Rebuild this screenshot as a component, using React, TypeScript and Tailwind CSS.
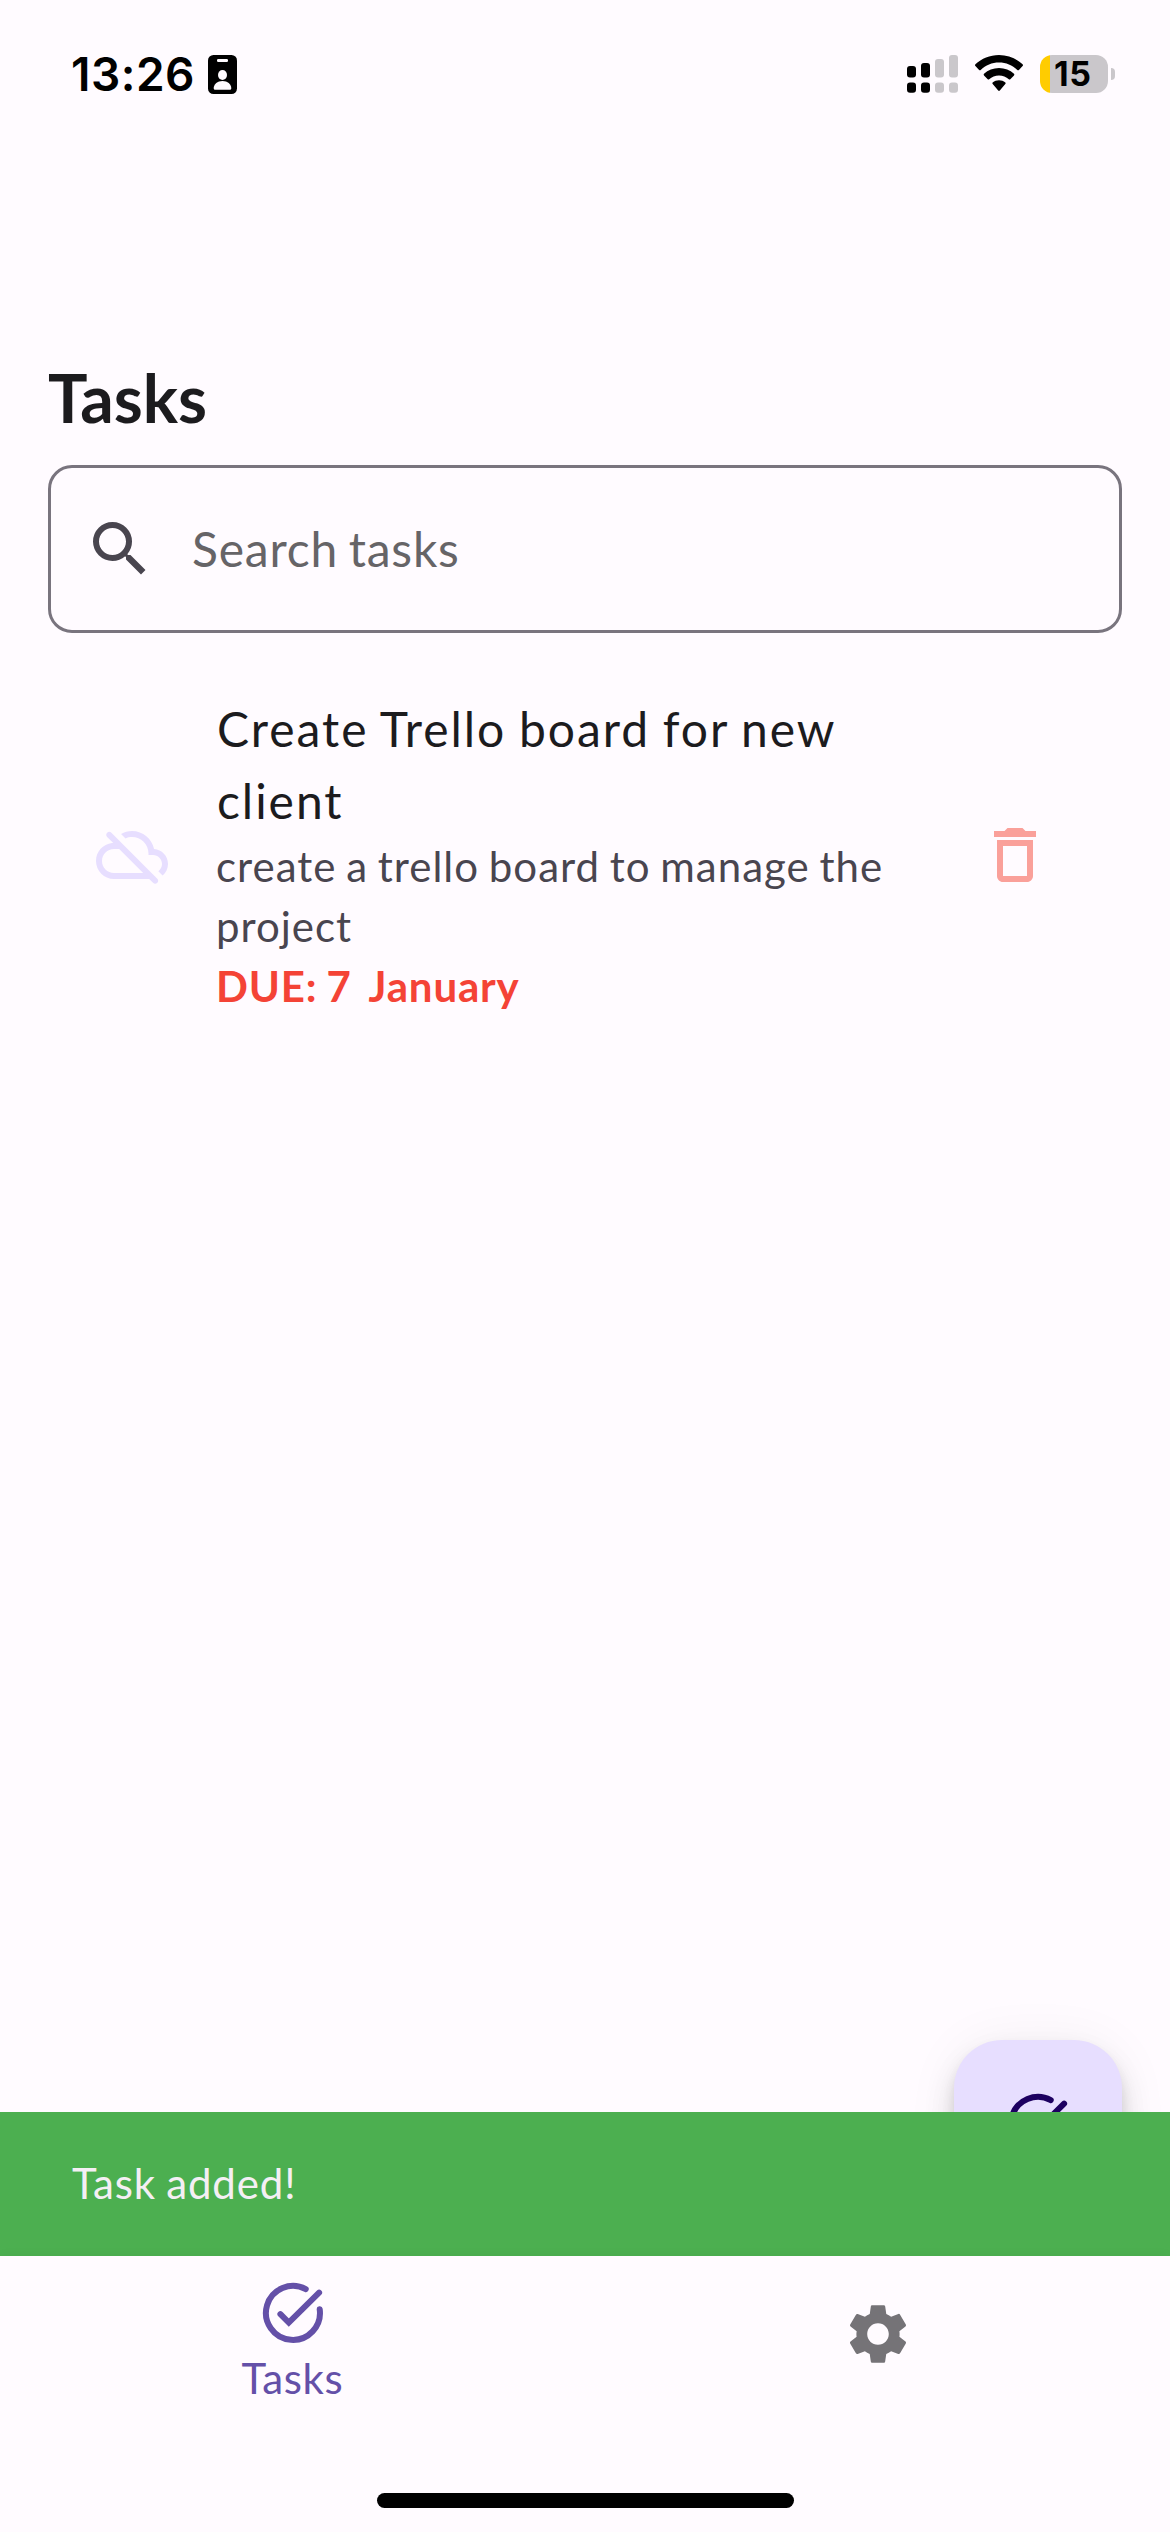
import { MdDeleteOutline, MdSearch, MdSettings } from 'react-icons/md';

function TaskAltIcon({ className }: { className: string }) {
  return (
    <svg viewBox="0 0 24 24" fill="none" stroke="currentColor" strokeWidth="2" strokeLinecap="round" className={className}>
      <path d="M16.25 4.05A9 9 0 1 0 20.9 10.75" />
      <path d="M7.8 12.4l2.8 2.8L20.7 5.2" />
    </svg>
  );
}

function CloudOffIcon({ className }: { className: string }) {
  return (
    <svg viewBox="0 0 24 24" fill="currentColor" className={className}>
      <path d="M24 15c0-2.64-2.05-4.78-4.65-4.96C18.67 6.59 15.64 4 12 4c-1.33 0-2.57.36-3.65.97l1.49 1.49C10.51 6.17 11.23 6 12 6c3.04 0 5.5 2.46 5.5 5.5v.5H19c1.66 0 3 1.34 3 3 0 .99-.48 1.85-1.21 2.4l1.41 1.41c1.09-.92 1.8-2.27 1.8-3.81zM3.71 4.56c-.39.39-.39 1.02 0 1.41l2.06 2.06h-.42C2.34 8.36 0 10.91 0 14c0 3.31 2.69 6 6 6h11.73l1.29 1.29c.39.39 1.02.39 1.41 0 .39-.39.39-1.02 0-1.41L5.12 4.56c-.39-.39-1.02-.39-1.41 0zM7.73 10l8 8H6c-2.21 0-4-1.79-4-4s1.79-4 4-4h1.73z" />
    </svg>
  );
}

function IdBadgeIcon() {
  return (
    <svg viewBox="0 0 29 39" className="h-[39px] w-[29px]">
      <rect width="29" height="39" rx="5.5" fill="#000" />
      <rect x="9" y="4" width="11" height="3" rx="1.2" fill="#fffbff" />
      <ellipse cx="14.5" cy="20" rx="4.5" ry="5" fill="#fffbff" />
      <path d="M5.7 33.2c0-4 3.8-7.2 8.8-7.2s8.8 3.2 8.8 7.2c0 .9-.5 1.5-1.5 1.5H7.2c-1 0-1.5-.6-1.5-1.5z" fill="#fffbff" />
    </svg>
  );
}

function SignalIcon() {
  return (
    <svg viewBox="0 0 51 38" className="h-[38px] w-[51px]">
      <g fill="#000">
        <rect x="0" y="11" width="9" height="11.5" rx="3" />
        <rect x="14" y="8" width="9" height="14.5" rx="3" />
        <rect x="0" y="27.5" width="9" height="10.3" rx="3" />
        <rect x="14" y="27.5" width="9" height="10.3" rx="3" />
      </g>
      <g fill="#cac7cb">
        <rect x="28" y="4" width="9" height="18.5" rx="3" />
        <rect x="42" y="0" width="9" height="22.5" rx="3" />
        <rect x="28" y="27.5" width="9" height="10.3" rx="3" />
        <rect x="42" y="27.5" width="9" height="10.3" rx="3" />
      </g>
    </svg>
  );
}

function WifiIcon() {
  return (
    <svg viewBox="0 0 48 36" className="h-9 w-12">
      <path d="M24 0C14.8 0 6.6 3.5.4 9.3c-.5.5-.5 1.2 0 1.7l3.7 3.9c.5.5 1.1.5 1.6 0C10.6 10.3 17 7.6 24 7.6s13.4 2.7 18.3 7.3c.5.5 1.1.5 1.6 0l3.7-3.9c.5-.5.5-1.2 0-1.7C41.4 3.5 33.2 0 24 0z" />
      <path d="M24 13c-5.8 0-11 2.2-15 5.8-.5.5-.5 1.1 0 1.6l3.7 3.9c.4.4 1 .4 1.5 0 2.6-2.3 6-3.7 9.8-3.7s7.2 1.4 9.8 3.7c.5.4 1.1.4 1.5 0l3.7-3.9c.5-.5.5-1.1 0-1.6-4-3.6-9.2-5.8-15-5.8z" />
      <path d="M24 25.3c-2.4 0-4.6.8-6.3 2.2-.5.4-.5 1 0 1.5l5.5 6.5c.5.5 1.1.5 1.6 0l5.5-6.5c.5-.5.5-1.1 0-1.5-1.7-1.4-3.9-2.2-6.3-2.2z" />
    </svg>
  );
}

function Battery({ level }: { level: string }) {
  return (
    <div className="flex h-[38px] items-center gap-[3px]">
      <div className="flex h-[38px] w-[68px] items-center rounded-[12px] bg-linear-to-r from-[#ffcc00] from-[10px] to-[#cac7cb] to-[10px] pl-[14px]">
        <span className="font-[Inter] text-[34px] leading-[42px] font-bold tracking-[0.5px]">{level}</span>
      </div>
      <div className="h-[12px] w-[4px] rounded-r-full bg-[#cac7cb]" />
    </div>
  );
}

function StatusBar() {
  return (
    <header className="flex h-[150px] items-start justify-between pr-[55px] pl-[71px] text-black">
      <div className="flex pt-[46px]">
        <span className="w-[137px] font-[Inter] text-[46px] leading-[56px] font-semibold tracking-[0.5px]">13:26</span>
        <div className="pt-[9px]">
          <IdBadgeIcon />
        </div>
      </div>
      <div className="flex pt-[55px]">
        <div className="mr-[17px]">
          <SignalIcon />
        </div>
        <div className="mr-[17px]">
          <WifiIcon />
        </div>
        <Battery level="15" />
      </div>
    </header>
  );
}

function TaskRow() {
  return (
    <li className="mt-[60px] flex items-center px-12">
      <CloudOffIcon className="mr-12 size-[72px] shrink-0 text-[#e7deff]" />
      <div className="w-[715px] pb-px leading-[60px]">
        <p className="pl-px text-[48px] leading-[72px] tracking-[1.95px] text-[#1c1b1e] [word-spacing:-1.5px]">Create Trello board for new client</p>
        <p className="-mt-px text-[42px] tracking-[1px] text-[#49454f] [word-spacing:-2px]">create a trello board to manage the project</p>
        <p className="text-[42px] font-bold tracking-[0.84px] whitespace-pre text-[#f44336] [word-spacing:-2px]">{'DUE: 7\u00a0\u00a0January'}</p>
      </div>
      <MdDeleteOutline className="ml-12 size-[72px] shrink-0 text-[#faa09a]" />
    </li>
  );
}

export default function App() {
  return (
    <div className="flex h-[2532px] w-[1170px] flex-col overflow-hidden bg-[#fffbff] font-[Lato,sans-serif]">
      <StatusBar />
      <main className="relative flex-1 px-12 pt-[206px]">
        <h1 className="text-[66px] leading-[84px] font-bold text-[#1c1b1e]">Tasks</h1>
        <div className="mt-[25px] flex h-[168px] items-center rounded-[24px] border-[3px] border-[#79747e] px-[33px]">
          <MdSearch className="size-[72px] text-[#49454f]" />
          <span className="ml-9 text-[48px] leading-[72px] tracking-[0.8px] text-[#666467] [word-spacing:-2.5px]">Search tasks</span>
        </div>
        <ul>
          <TaskRow />
        </ul>
        <button className="absolute right-12 -bottom-24 flex size-[168px] items-center justify-center rounded-[48px] bg-[#e7deff] text-[#1d0061] shadow-[0_9px_15px_-3px_rgba(0,0,0,0.14),0_18px_30px_rgba(0,0,0,0.12),0_3px_54px_rgba(0,0,0,0.06)]">
          <TaskAltIcon className="size-[72px]" />
        </button>
      </main>
      <div className="relative flex h-36 items-center bg-[#4caf50] px-[72px] pb-0.5 text-[42px] leading-[60px] tracking-[0.9px] text-[#f4eff4] [word-spacing:-1.5px]">Task added!</div>
      <nav className="relative grid h-[237px] grid-cols-2 bg-[#fffbff] shadow-[0_0_12px_rgba(0,0,0,0.04)]">
        <div className="flex flex-col items-center pt-[21px] text-[#6450a8]">
          <TaskAltIcon className="size-[72px]" />
          <span className="text-[42px] leading-[59px] tracking-[0.65px]">Tasks</span>
        </div>
        <div className="flex justify-center pt-[42px]">
          <MdSettings className="size-[72px] text-[#757377]" />
        </div>
      </nav>
      <div className="relative flex h-[39px] justify-center bg-[#fffbff]">
        <div className="h-[15px] w-[417px] rounded-full bg-black" />
      </div>
    </div>
  );
}
